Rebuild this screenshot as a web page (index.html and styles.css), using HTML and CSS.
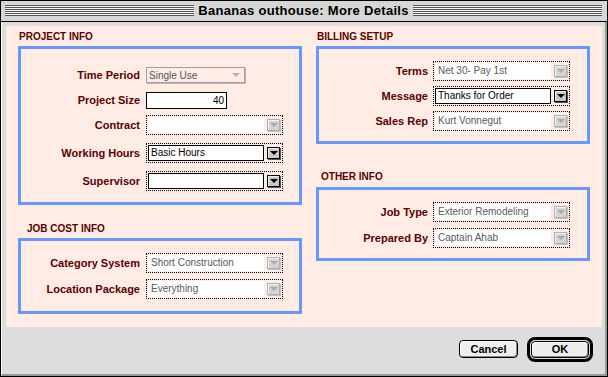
FILE: index.html
```html
<!DOCTYPE html>
<html>
<head>
    <title>More Details</title>
    <link rel="stylesheet" href="styles.css">
</head>
<body>
    <div class="window">
        <div class="titlebar">
            <span class="stripes"></span>
            <span class="title">Bananas outhouse: More Details</span>
            <span class="stripes"></span>
        </div>
        <div class="frame">
            <div class="panel">
                <div class="column">
                    <div class="section-head head-project">PROJECT INFO</div>
                    <div class="group group-project">
                        <div class="row">
                            <span class="label">Time Period</span>
                            <div class="popup-plain"><span>Single Use</span><span class="arrow arrow-faint"></span></div>
                        </div>
                        <div class="row">
                            <span class="label">Project Size</span>
                            <div class="text-input">40</div>
                        </div>
                        <div class="row">
                            <span class="label">Contract</span>
                            <div class="combo disabled">
                                <div class="combo-field"></div>
                                <div class="combo-button"><span class="arrow"></span></div>
                            </div>
                        </div>
                        <div class="row row-spaced">
                            <span class="label">Working Hours</span>
                            <div class="combo">
                                <div class="combo-field">Basic Hours</div>
                                <div class="combo-button"><span class="arrow"></span></div>
                            </div>
                        </div>
                        <div class="row row-spaced">
                            <span class="label">Supervisor</span>
                            <div class="combo">
                                <div class="combo-field"></div>
                                <div class="combo-button"><span class="arrow"></span></div>
                            </div>
                        </div>
                    </div>

                    <div class="section-head head-jobcost">JOB COST INFO</div>
                    <div class="group group-jobcost">
                        <div class="row">
                            <span class="label">Category System</span>
                            <div class="combo disabled">
                                <div class="combo-field">Short Construction</div>
                                <div class="combo-button"><span class="arrow"></span></div>
                            </div>
                        </div>
                        <div class="row">
                            <span class="label">Location Package</span>
                            <div class="combo disabled">
                                <div class="combo-field">Everything</div>
                                <div class="combo-button"><span class="arrow"></span></div>
                            </div>
                        </div>
                    </div>
                </div>

                <div class="column column-right">
                    <div class="section-head head-billing">BILLING SETUP</div>
                    <div class="group group-billing">
                        <div class="row">
                            <span class="label">Terms</span>
                            <div class="combo disabled">
                                <div class="combo-field">Net 30- Pay 1st</div>
                                <div class="combo-button"><span class="arrow"></span></div>
                            </div>
                        </div>
                        <div class="row">
                            <span class="label">Message</span>
                            <div class="combo">
                                <div class="combo-field">Thanks for Order</div>
                                <div class="combo-button"><span class="arrow"></span></div>
                            </div>
                        </div>
                        <div class="row">
                            <span class="label">Sales Rep</span>
                            <div class="combo disabled">
                                <div class="combo-field">Kurt Vonnegut</div>
                                <div class="combo-button"><span class="arrow"></span></div>
                            </div>
                        </div>
                    </div>

                    <div class="section-head head-other">OTHER INFO</div>
                    <div class="group group-other">
                        <div class="row">
                            <span class="label">Job Type</span>
                            <div class="combo disabled">
                                <div class="combo-field">Exterior Remodeling</div>
                                <div class="combo-button"><span class="arrow"></span></div>
                            </div>
                        </div>
                        <div class="row">
                            <span class="label">Prepared By</span>
                            <div class="combo disabled">
                                <div class="combo-field">Captain Ahab</div>
                                <div class="combo-button"><span class="arrow"></span></div>
                            </div>
                        </div>
                    </div>
                </div>
            </div>

            <div class="footer">
                <button class="btn btn-cancel">Cancel</button>
                <div class="btn-default-ring"><button class="btn btn-ok">OK</button></div>
            </div>
        </div>
    </div>
</body>
</html>
```

FILE: styles.css
```css
/* Classic dialog look */
body {
    margin: 0;
    padding: 0;
    background-color: #fff;
    font-family: "Liberation Sans", Arial, sans-serif;
}
.window {
    width: 608px;
    height: 377px;
    box-sizing: border-box;
    border: 1px solid #000;
    background-color: #dddddd;
}
.titlebar {
    height: 20px;
    border-bottom: 1px solid #000;
    background-color: #d6d6d6;
    display: flex;
    align-items: center;
    padding: 0 5px 0 4px;
}
.stripes {
    flex: 1;
    height: 11px;
    margin-top: -1px;
    background: repeating-linear-gradient(to bottom, #555 0 1px, #f6f6f6 1px 2px);
}
.title {
    padding: 0 4px;
    font-size: 13px;
    font-weight: bold;
    letter-spacing: 0.3px;
    color: #000;
    line-height: 20px;
}
.frame {
    height: 354px;
    box-sizing: border-box;
    border-left: 1px solid #fff;
    border-right: 2px solid #999;
    border-bottom: 2px solid #999;
    padding: 4px 3px 0 4px;
}
.panel {
    height: 301px;
    box-sizing: border-box;
    background-color: #ffede5;
    padding-left: 12px;
    display: grid;
    grid-template-columns: 284px 274px;
    column-gap: 14px;
    align-items: start;
}
.section-head {
    height: 10px;
    line-height: 10px;
    font-size: 10px;
    font-weight: bold;
    color: #5c0000;
    margin-bottom: 4px;
}
.head-project { margin-top: 6px; padding-left: 1px; }
.head-jobcost { margin-top: 19px; padding-left: 9px; }
.head-billing { margin-top: 6px; padding-left: 1px; }
.head-other { margin-top: 28px; padding-left: 5px; margin-bottom: 5px; }

.group {
    border: 3px solid #6699ff;
    display: flex;
    flex-direction: column;
    gap: 5px;
}
.group-project { padding: 16px 0 11px; }
.group-jobcost { padding: 12px 0 12px; gap: 6px; }
.group-billing { padding: 12px 0 10px; }
.group-other { padding: 12px 0 10px; gap: 6px; }

.row {
    display: flex;
    align-items: center;
    height: 20px;
}
.row-spaced { margin-top: 3px; }
.label {
    width: 119px;
    margin-right: 6px;
    text-align: right;
    font-size: 11px;
    font-weight: bold;
    color: #5c0000;
}
.column-right .label {
    width: 109px;
    margin-right: 5px;
}

/* popups and fields */
.popup-plain {
    width: 99px;
    height: 16px;
    box-sizing: border-box;
    border: 1px solid #a0a0a0;
    box-shadow: 1px 1px 0 #b8b8b8;
    display: flex;
    align-items: center;
    padding-left: 2px;
    font-size: 10px;
    color: #555;
}
.popup-plain .arrow {
    margin-left: auto;
    margin-right: 4px;
}
.text-input {
    width: 81px;
    height: 17px;
    box-sizing: border-box;
    border: 1px solid #000;
    background-color: #fff;
    text-align: right;
    padding-right: 2px;
    font-size: 10px;
    line-height: 15px;
    color: #000;
}
.combo {
    width: 137px;
    height: 20px;
    box-sizing: border-box;
    border: 1px dotted #000;
    padding: 1px;
    display: flex;
    align-items: center;
}
.combo-field {
    width: 116px;
    height: 16px;
    box-sizing: border-box;
    border: 1px solid #000;
    background-color: #fff;
    padding-left: 2px;
    font-size: 10px;
    line-height: 14px;
    color: #000;
    white-space: nowrap;
    overflow: hidden;
}
.combo-button {
    width: 13px;
    height: 12px;
    box-sizing: border-box;
    margin-left: 3px;
    border: 1px solid #000;
    background-color: #c8c8c8;
    box-shadow: inset 1px 1px 0 #f0f0f0, 1px 1px 0 #555;
    display: flex;
    align-items: center;
    justify-content: center;
}
.arrow {
    width: 0;
    height: 0;
    border-left: 4px solid transparent;
    border-right: 4px solid transparent;
    border-top: 4px solid #000;
}
.arrow-faint {
    border-top-color: #b4b4b4;
}
.combo.disabled .combo-field {
    border-color: #fff;
    color: #5a5a5a;
}
.combo.disabled .combo-button {
    border-color: #b0b0b0;
    background-color: #d4d4d4;
    box-shadow: inset 1px 1px 0 #f4f4f4, 1px 1px 0 #c0c0c0;
}
.combo.disabled .arrow {
    border-top-color: #aaa;
}

/* buttons */
.footer {
    height: 47px;
    box-sizing: border-box;
    display: flex;
    align-items: center;
    justify-content: flex-end;
    padding: 0 9px 3px 0;
}
.btn {
    font-family: "Liberation Sans", Arial, sans-serif;
    font-size: 11px;
    font-weight: bold;
    color: #000;
    background-color: #eeeeee;
    border: 1px solid #000;
    border-radius: 4px;
    box-shadow: inset 1px 1px 0 #fff, inset -1px -1px 0 #888;
    padding: 0;
    cursor: pointer;
}
.btn-cancel {
    width: 59px;
    height: 18px;
    margin-right: 9px;
}
.btn-default-ring {
    width: 66px;
    height: 25px;
    box-sizing: border-box;
    border: 3px solid #000;
    border-radius: 8px;
    padding: 1px;
}
.btn-ok {
    width: 58px;
    height: 17px;
    display: block;
}
```
